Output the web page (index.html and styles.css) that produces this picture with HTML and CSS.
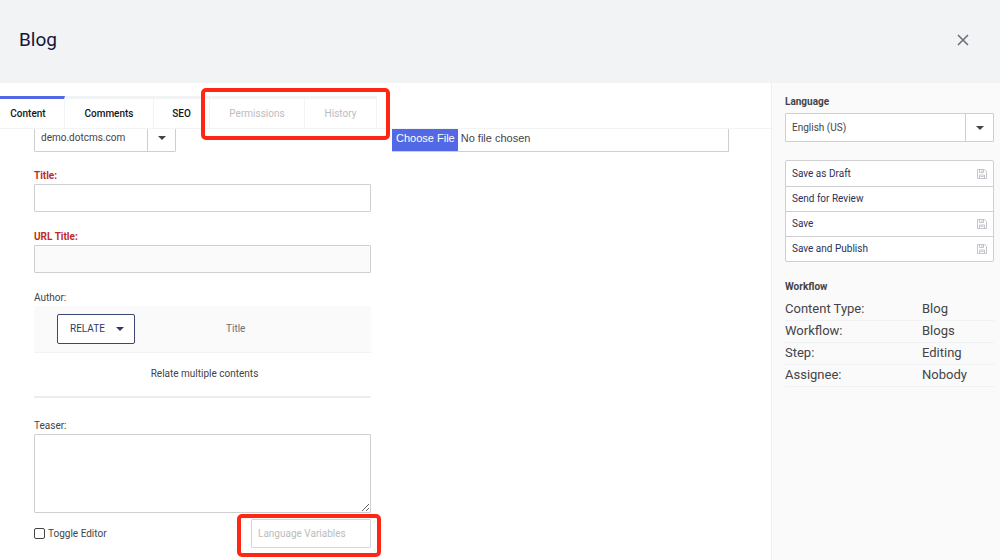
FILE: index.html
```html
<!DOCTYPE html>
<html lang="en">
<head>
<meta charset="utf-8">
<meta name="viewport" content="width=device-width, initial-scale=1">
<title>Blog</title>
<link rel="stylesheet" href="styles.css">
</head>
<body>
<header class="header">
  <h1 class="header-title">Blog</h1>
  <button class="close" type="button" aria-label="Close">
    <svg width="12" height="12" viewBox="0 0 12 12"><path d="M1 1L11 11M11 1L1 11" fill="none" stroke="currentColor" stroke-width="1.5"/></svg>
  </button>
</header>
<div class="layout">
  <main class="main">
    <nav class="tabs">
      <button class="tab tab-active" type="button">Content</button>
      <button class="tab tab-comments" type="button">Comments</button>
      <button class="tab tab-seo" type="button">SEO</button>
      <div class="tab-group">
        <button class="tab tab-permissions" type="button" disabled>Permissions</button>
        <button class="tab tab-history" type="button" disabled>History</button>
        <span class="highlight highlight-tabs"></span>
      </div>
    </nav>
    <form class="form">
      <div class="form-body">
        <div class="column">
          <div class="select host-select">
            <select aria-label="Host"><option>demo.dotcms.com</option></select>
            <span class="select-arrow"><svg width="8" height="4" viewBox="0 0 8 4"><path d="M0 0H8L4 4Z" fill="currentColor"/></svg></span>
          </div>
          <div class="field">
            <label class="label label-required" for="title">Title:</label>
            <input class="input" id="title" type="text">
          </div>
          <div class="field">
            <label class="label label-required" for="url-title">URL Title:</label>
            <input class="input input-readonly" id="url-title" type="text" readonly>
          </div>
          <div class="field">
            <span class="label">Author:</span>
            <table class="relate">
              <thead>
                <tr>
                  <th class="relate-action">
                    <button class="relate-button" type="button">RELATE
                      <svg width="8" height="4" viewBox="0 0 8 4"><path d="M0 0H8L4 4Z" fill="currentColor"/></svg>
                    </button>
                  </th>
                  <th class="relate-title">Title</th>
                </tr>
              </thead>
              <tbody>
                <tr><td colspan="2">Relate multiple contents</td></tr>
              </tbody>
            </table>
          </div>
          <div class="field field-teaser">
            <label class="label" for="teaser">Teaser:</label>
            <textarea class="textarea" id="teaser"></textarea>
            <div class="editor-bar">
              <label class="toggle"><input class="checkbox" type="checkbox">Toggle Editor</label>
              <div class="variables">
                <input class="variables-input" type="text" placeholder="Language Variables" aria-label="Language Variables" disabled>
                <span class="highlight highlight-variables"></span>
              </div>
            </div>
          </div>
        </div>
        <div class="column">
          <input class="file" type="file" aria-label="File">
        </div>
      </div>
    </form>
  </main>
  <aside class="sidebar">
    <label class="side-heading" for="language">Language</label>
    <div class="select">
      <select id="language"><option>English (US)</option></select>
      <span class="select-arrow"><svg width="8" height="4" viewBox="0 0 8 4"><path d="M0 0H8L4 4Z" fill="currentColor"/></svg></span>
    </div>
    <div class="actions">
      <button class="action" type="button">Save as Draft
        <svg class="disk" width="10" height="10" viewBox="0 0 10 10"><path d="M.5 .5H7.5L9.5 2.5V9.5H.5ZM2.5 .5V3.5H6.5V.5M5 1V3M2.5 9.5V6H7.5V9.5M3.5 7.5H6.5" fill="none" stroke="currentColor" stroke-width=".8"/></svg>
      </button>
      <button class="action" type="button">Send for Review</button>
      <button class="action" type="button">Save
        <svg class="disk" width="10" height="10" viewBox="0 0 10 10"><path d="M.5 .5H7.5L9.5 2.5V9.5H.5ZM2.5 .5V3.5H6.5V.5M5 1V3M2.5 9.5V6H7.5V9.5M3.5 7.5H6.5" fill="none" stroke="currentColor" stroke-width=".8"/></svg>
      </button>
      <button class="action" type="button">Save and Publish
        <svg class="disk" width="10" height="10" viewBox="0 0 10 10"><path d="M.5 .5H7.5L9.5 2.5V9.5H.5ZM2.5 .5V3.5H6.5V.5M5 1V3M2.5 9.5V6H7.5V9.5M3.5 7.5H6.5" fill="none" stroke="currentColor" stroke-width=".8"/></svg>
      </button>
    </div>
    <h2 class="side-heading side-workflow">Workflow</h2>
    <table class="info">
      <tbody>
        <tr><th>Content Type:</th><td>Blog</td></tr>
        <tr><th>Workflow:</th><td>Blogs</td></tr>
        <tr><th>Step:</th><td>Editing</td></tr>
        <tr><th>Assignee:</th><td>Nobody</td></tr>
      </tbody>
    </table>
  </aside>
</div>
</body>
</html>
```

FILE: styles.css
```css
* {
  box-sizing: border-box;
}

body {
  margin: 0;
  min-height: 100vh;
  display: flex;
  flex-direction: column;
  background: #fff;
  color: #444447;
  font: 10px/16px Roboto, "Liberation Sans", sans-serif;
}

button,
input,
select,
textarea {
  margin: 0;
  font: inherit;
  color: inherit;
}

.header {
  display: flex;
  align-items: center;
  justify-content: space-between;
  padding: 24px 31px 27px 19px;
  background: #f1f3f5;
}

.header-title {
  margin: 0;
  color: #14143a;
  font-size: 19px;
  font-weight: 400;
  line-height: 32px;
}

.close {
  display: flex;
  padding: 0;
  border: 0;
  background: none;
  color: #6b6b76;
}

.layout {
  flex: 1;
  display: flex;
}

.main {
  flex: 1;
  min-width: 0;
}

.tabs {
  display: flex;
  padding-top: 13px;
  border-bottom: 1px solid #f1f3f4;
}

.tab {
  height: 32px;
  padding: 0;
  border: 0;
  border-top: 3px solid #f1f3f4;
  border-right: 1px solid #f1f3f4;
  background: #fff;
  color: #14151a;
  font-weight: 500;
  text-align: center;
}

.tab-active {
  width: 65px;
  padding-right: 8px;
  border-top-color: #5368e4;
}

.tab-comments {
  width: 89px;
}

.tab-seo {
  width: 56px;
}

.tab-permissions {
  width: 95px;
}

.tab-history {
  width: 72px;
}

.tab:disabled {
  color: #bcbcbe;
  font-weight: 400;
}

.tab-group {
  position: relative;
  display: flex;
}

.highlight {
  position: absolute;
  z-index: 1;
  border: 4px solid #ff2713;
  border-radius: 5px;
  pointer-events: none;
}

.highlight-tabs {
  inset: -8px -13px -12px -9px;
}

.highlight-variables {
  inset: -5px -10px -9px -14px;
}

.form {
  overflow: hidden;
}

.form-body {
  display: grid;
  grid-template-columns: 1fr 1fr;
  gap: 21px;
  margin-top: -6px;
  padding: 0 42px 12px 34px;
}

.column {
  min-width: 0;
}

.select {
  position: relative;
  height: 29px;
}

.host-select {
  width: 142px;
}

.select select {
  width: 100%;
  height: 100%;
  padding: 0 30px 0 6px;
  border: 1px solid #cdcfd1;
  border-radius: 1px;
  background: #fff;
  appearance: none;
}

.select-arrow {
  position: absolute;
  inset: 1px 1px 1px auto;
  width: 28px;
  display: flex;
  align-items: center;
  justify-content: center;
  border-left: 1px solid #cdcfd1;
  pointer-events: none;
}

.field {
  display: flex;
  flex-direction: column;
  margin-top: 16px;
}

.field + .field {
  margin-top: 17px;
}

.field + .field-teaser {
  margin-top: 20px;
}

.label {
  font-size: 10px;
}

.label-required {
  color: #bf2b1d;
  font-weight: 700;
}

.input {
  width: 100%;
  height: 28px;
  padding: 0 6px;
  border: 1px solid #cdcfd1;
  border-radius: 1px;
  background: #fff;
}

.input-readonly {
  background: #fafafa;
}

.relate {
  width: 100%;
  border-collapse: collapse;
  border-bottom: 2px solid #ebedee;
}

.relate th {
  height: 46px;
  padding: 0;
  border-bottom: 1px solid #f1f3f4;
  background: #fafafa;
  font-weight: 400;
  text-align: left;
}

.relate .relate-action {
  width: 192px;
  padding-left: 23px;
}

.relate-title {
  color: #6b6d74;
}

.relate td {
  height: 45px;
  padding: 0 0 0 4px;
  text-align: center;
}

.relate-button {
  display: flex;
  align-items: center;
  justify-content: space-between;
  width: 78px;
  height: 30px;
  padding: 0 10px 0 12px;
  border: 1px solid #3d4673;
  border-radius: 2px;
  background: #fff;
  color: #2f3a6b;
}

.textarea {
  width: 100%;
  height: 79px;
  padding: 6px;
  border: 1px solid #cdcfd1;
  border-radius: 1px;
  resize: vertical;
}

.editor-bar {
  display: flex;
  align-items: center;
  justify-content: space-between;
  padding-top: 6px;
}

.toggle {
  display: flex;
  align-items: center;
  gap: 3px;
}

.checkbox {
  width: 11px;
  height: 11px;
  border: 1px solid #444447;
  border-radius: 2px;
  background: #fff;
  appearance: none;
}

.variables {
  position: relative;
  width: 120px;
}

.variables-input {
  display: block;
  width: 100%;
  height: 29px;
  padding: 0 6px;
  border: 1px solid #d5d6d8;
  border-radius: 1px;
  background: #fff;
}

.variables-input::placeholder {
  color: #bcbcbe;
}

.file {
  display: block;
  width: 100%;
  height: 29px;
  border: 1px solid #cdcfd1;
  border-left: 0;
  font-family: "Liberation Sans", sans-serif;
  font-size: 11px;
  line-height: 27px;
}

.file::file-selector-button {
  height: 28px;
  margin: 0 3px 0 0;
  padding: 0 3px 0 4px;
  border: 0;
  background: #5368e4;
  color: #fff;
  font: inherit;
}

.sidebar {
  width: 229px;
  padding: 11px 6px 10px 13px;
  border-left: 1px solid #ecf0f1;
  background: #fafafa;
}

.side-heading {
  display: block;
  margin: 0;
  padding-bottom: 3px;
  font-size: 10px;
  font-weight: 700;
  line-height: 16px;
}

.side-workflow {
  margin-top: 17px;
}

.actions {
  margin-top: 18px;
  border: 1px solid #cdcfd1;
  border-radius: 2px;
  background: #fff;
}

.action {
  display: flex;
  align-items: center;
  justify-content: space-between;
  width: 100%;
  height: 25px;
  padding: 0 6px;
  border: 0;
  background: none;
  color: #2b3158;
}

.action + .action {
  border-top: 1px solid #cdcfd1;
}

.disk {
  color: #b4b9c0;
}

.info {
  width: 100%;
  border-collapse: collapse;
  font-size: 13px;
}

.info th,
.info td {
  height: 22px;
  padding: 0;
  border-bottom: 1px solid #eff2f3;
  font-weight: 400;
  text-align: left;
}

.info th {
  width: 137px;
}
```
